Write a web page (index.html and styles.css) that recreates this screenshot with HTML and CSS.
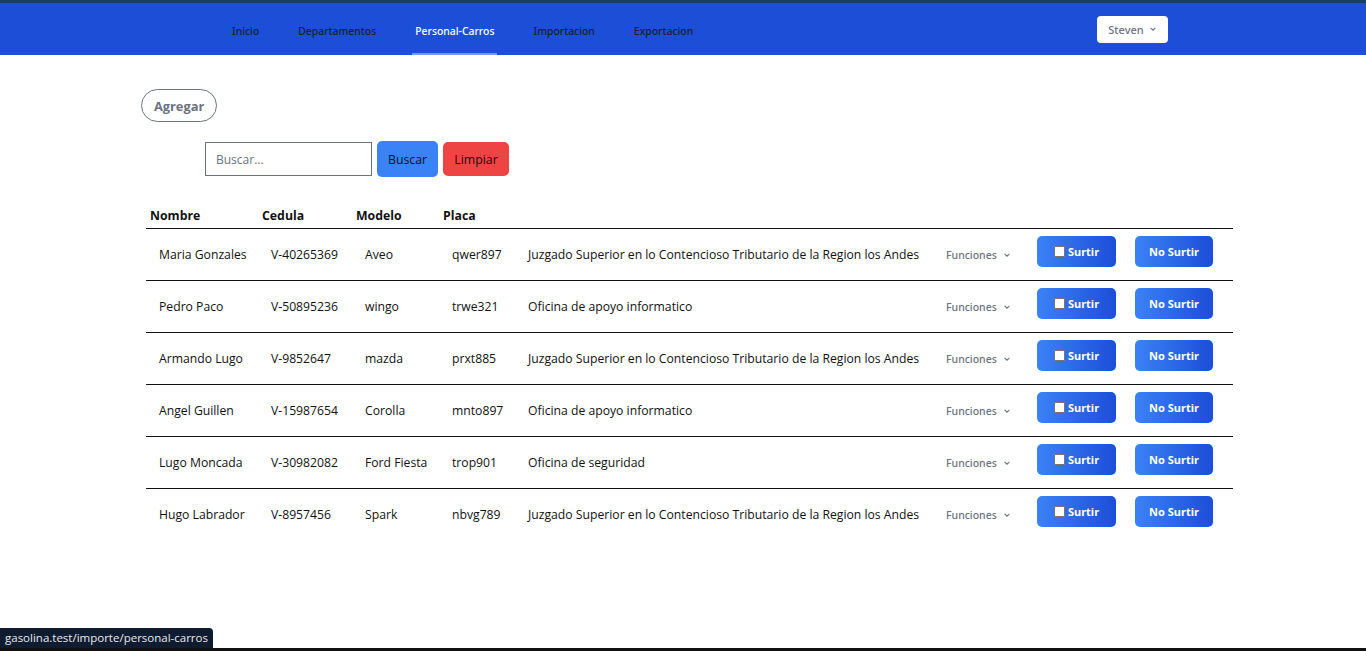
FILE: index.html
```html
<!DOCTYPE html>
<html lang="es">
<head>
<meta charset="utf-8">
<title>Personal-Carros</title>
<link rel="stylesheet" href="styles.css">
</head>
<body>
<div class="page">
  <nav class="navbar">
    <div class="nav-links">
      <a class="nav-link" href="#">Inicio</a>
      <a class="nav-link" href="#">Departamentos</a>
      <a class="nav-link active" href="#">Personal-Carros</a>
      <a class="nav-link" href="#">Importacion</a>
      <a class="nav-link" href="#">Exportacion</a>
    </div>
    <button class="user-btn">Steven <svg class="chev" viewBox="0 0 10 10" width="8" height="8"><path d="M2 3.5 L5 6.5 L8 3.5" fill="none" stroke="currentColor" stroke-width="1.3"/></svg></button>
  </nav>

  <main class="content">
    <button class="add-btn">Agregar</button>

    <form class="search">
      <input class="search-input" type="text" placeholder="Buscar...">
      <button type="button" class="btn-buscar">Buscar</button>
      <button type="button" class="btn-limpiar">Limpiar</button>
    </form>

    <table class="grid">
      <colgroup>
        <col class="c1"><col class="c2"><col class="c3"><col class="c4"><col class="c5"><col class="c6"><col class="c7"><col class="c8">
      </colgroup>
      <thead>
        <tr><th>Nombre</th><th>Cedula</th><th>Modelo</th><th>Placa</th><th></th><th></th><th></th><th></th></tr>
      </thead>
      <tbody id="rows"></tbody>
    </table>
  </main>
  <div class="status">gasolina.test/importe/personal-carros</div>
</div>
<script>
const data = [
  ["Maria Gonzales","V-40265369","Aveo","qwer897","Juzgado Superior en lo Contencioso Tributario de la Region los Andes"],
  ["Pedro Paco","V-50895236","wingo","trwe321","Oficina de apoyo informatico"],
  ["Armando Lugo","V-9852647","mazda","prxt885","Juzgado Superior en lo Contencioso Tributario de la Region los Andes"],
  ["Angel Guillen","V-15987654","Corolla","mnto897","Oficina de apoyo informatico"],
  ["Lugo Moncada","V-30982082","Ford Fiesta","trop901","Oficina de seguridad"],
  ["Hugo Labrador","V-8957456","Spark","nbvg789","Juzgado Superior en lo Contencioso Tributario de la Region los Andes"]
];
const chev = '<svg class="chev" viewBox="0 0 10 10" width="8" height="8"><path d="M2 3.5 L5 6.5 L8 3.5" fill="none" stroke="currentColor" stroke-width="1.3"/></svg>';
document.getElementById('rows').innerHTML = data.map(r =>
  '<tr>' + r.map(c => '<td>' + c + '</td>').join('') +
  '<td><span class="func">Funciones ' + chev + '</span></td>' +
  '<td><button class="act"><span class="box"></span>Surtir</button></td>' +
  '<td><button class="act wide">No Surtir</button></td></tr>'
).join('');
</script>
</body>
</html>
```

FILE: styles.css
```css
* { box-sizing: border-box; }
html, body { margin: 0; padding: 0; }
body {
  font-family: "Open Sans", "Noto Sans", sans-serif;
  color: #111;
  background: #fff;
}
.page {
  position: relative;
  height: 651px;
  border-bottom: 3px solid #111;
  overflow: hidden;
}
.navbar {
  height: 55px;
  border-top: 3px solid #1e3a66;
  background: #1d4ed8;
  display: flex;
  align-items: stretch;
  padding-left: 229px;
  padding-right: 198px;
}
.nav-links { display: flex; gap: 33px; }
.nav-link {
  display: flex;
  align-items: center;
  padding: 6px 3px 0;
  font-family: "Noto Sans", sans-serif;
  font-size: 10.4px;
  font-weight: 500;
  color: #1a1f2e;
  text-decoration: none;
  border-bottom: 2px solid transparent;
}
.nav-link.active { color: #fff; border-bottom-color: #7b93f2; }
.user-btn {
  margin-left: auto;
  align-self: center;
  width: 71px;
  height: 27px;
  border: none;
  border-radius: 4px;
  background: #fff;
  color: #6b7280;
  font-family: "Noto Sans", sans-serif;
  font-size: 11px;
  font-weight: 500;
  display: flex;
  align-items: center;
  justify-content: center;
  gap: 5px;
}
.chev { display: inline-block; }
.content { padding: 34px 133px 0 141px; }
.add-btn {
  height: 33px;
  padding: 0 12px;
  border: 1px solid #6b7280;
  border-radius: 17px;
  background: #fff;
  color: #6b7280;
  font-family: "Open Sans", sans-serif;
  font-weight: 700;
  font-size: 12.8px;
}
.search {
  display: flex;
  align-items: center;
  gap: 5px;
  margin: 19px 0 0 64px;
}
.search-input {
  width: 167px;
  height: 34px;
  border: 1px solid #6b7280;
  padding: 0 10px;
  font-family: "Open Sans", sans-serif;
  font-size: 12px;
  color: #111;
}
.search-input::placeholder { color: #6b7280; }
.btn-buscar, .btn-limpiar {
  border: none;
  border-radius: 5px;
  font-family: "Open Sans", sans-serif;
  font-size: 12.3px;
  color: #111;
}
.btn-buscar { width: 61px; height: 36px; background: #3b82f6; }
.btn-limpiar { width: 66px; height: 34px; background: #ef4444; color: #2a0a0a; }
.grid {
  margin: 26px 0 0 5px;
  width: 1087px;
  table-layout: fixed;
  border-collapse: collapse;
}
.c1 { width: 112px; } .c2 { width: 94px; } .c3 { width: 87px; } .c4 { width: 76px; }
.c5 { width: 418px; } .c6 { width: 91px; } .c7 { width: 98px; } .c8 { width: 111px; }
.grid th {
  text-align: left;
  padding: 0 0 0 4px;
  height: 25px;
  font-size: 12.3px;
  font-weight: 700;
  border-bottom: 1px solid #111;
  vertical-align: middle;
}
.grid td {
  height: 52px;
  padding: 1px 0 0 13px;
  font-size: 12.2px;
  white-space: nowrap;
  border-bottom: 1px solid #111;
  vertical-align: middle;
}
.grid tbody tr:last-child td { border-bottom: none; }
.func {
  display: inline-flex;
  align-items: center;
  gap: 6px;
  margin-top: -3px;
  font-family: "Noto Sans", sans-serif;
  font-size: 10.5px;
  font-weight: 500;
  color: #6b7280;
}
.act {
  display: inline-flex;
  align-items: center;
  justify-content: center;
  gap: 3px;
  width: 79px;
  height: 31px;
  margin-top: -7px;
  border: none;
  border-radius: 5px;
  background: linear-gradient(90deg, #3b82f6, #1d4ed8);
  color: #fff;
  font-family: "Noto Sans", sans-serif;
  font-size: 11px;
  font-weight: 700;
}
.act.wide { width: 78px; }
.box {
  width: 11px;
  height: 11px;
  background: #fff;
  border: 1px solid #767676;
  border-radius: 1px;
}
.status {
  position: absolute;
  left: 0;
  bottom: 0;
  height: 20px;
  padding: 0 5px;
  background: #0f1c30;
  color: #e8eaf0;
  border-top-right-radius: 4px;
  font-family: "Open Sans", sans-serif;
  font-size: 11.5px;
  line-height: 20px;
}
```
